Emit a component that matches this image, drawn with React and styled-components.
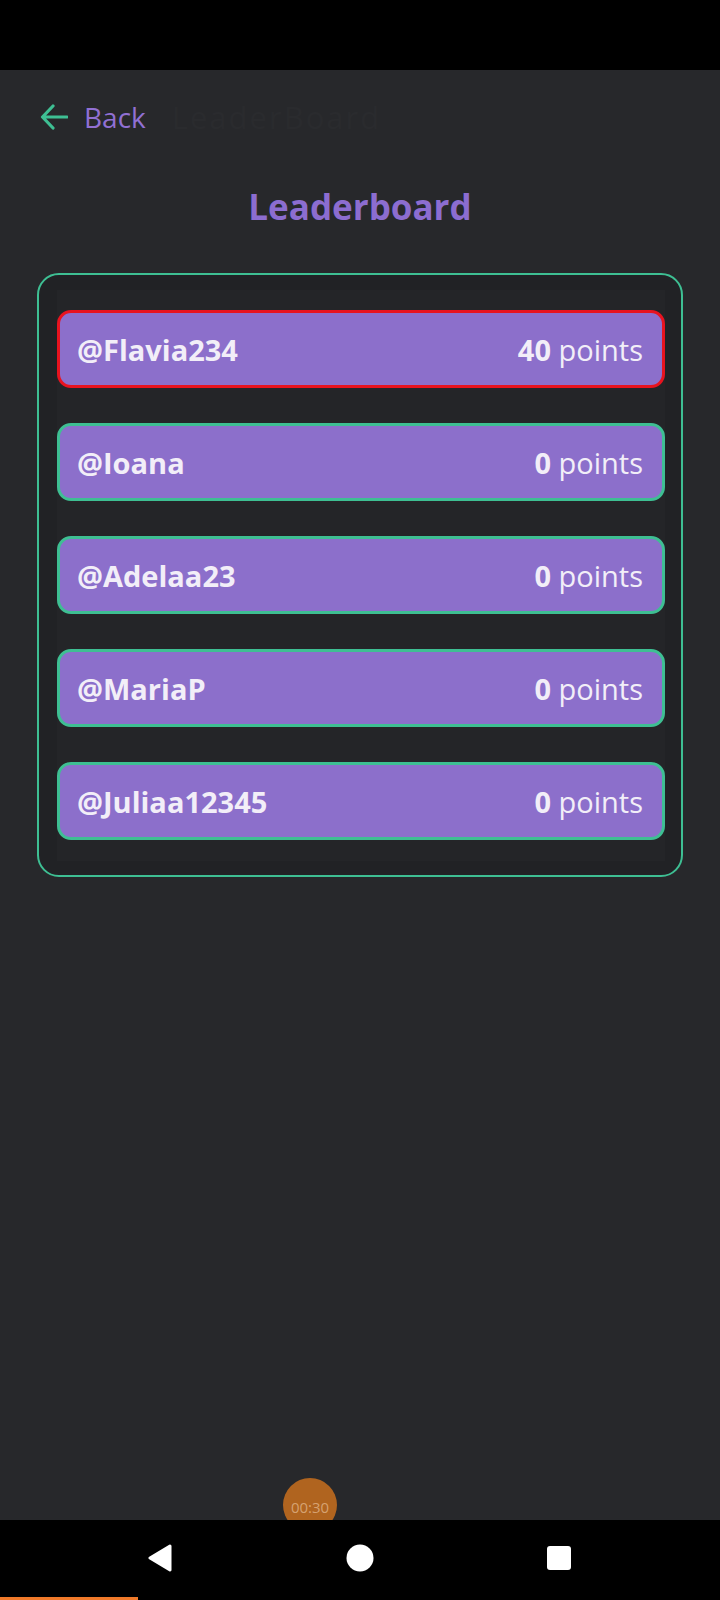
import React from 'react';
import styled, { createGlobalStyle } from 'styled-components';

const GlobalStyle = createGlobalStyle`
    html, body {
        margin: 0;
        padding: 0;
        background: #27282b;
    }
    * {
        box-sizing: border-box;
    }
`;

const Screen = styled.div`
    position: relative;
    display: flex;
    flex-direction: column;
    min-height: 1600px;
    background: #27282b;
    font-family: 'Open Sans', 'DejaVu Sans', sans-serif;
`;

const StatusBar = styled.div`
    height: 70px;
    background: #000;
`;

const Header = styled.div`
    display: flex;
    align-items: center;
    height: 34px;
    margin-top: 30px;
    padding-left: 40px;
`;

const BackButton = styled.div`
    display: flex;
    align-items: center;
    gap: 16px;
    color: #9170d3;
    font-size: 28px;
    line-height: 34px;

    svg {
        display: block;
    }
`;

const GhostTitle = styled.span`
    margin-left: 26px;
    font-size: 31px;
    letter-spacing: 2px;
    line-height: 34px;
    color: #2a2b2e;
`;

const Title = styled.h1`
    margin: 53px 0 0;
    text-align: center;
    font-size: 35px;
    line-height: 40px;
    font-weight: 700;
    color: #8c6dd0;
`;

const Board = styled.div`
    margin: 46px 37px 0;
    padding: 15px 16px 14px 18px;
    border: 2px solid #3ebf93;
    border-radius: 22px;
    background: #212225;
`;

const List = styled.div`
    display: flex;
    flex-direction: column;
    gap: 35px;
    padding: 20px 0 21px;
    background: #242528;
`;

const Row = styled.div`
    display: flex;
    align-items: center;
    justify-content: space-between;
    height: 78px;
    padding: 0 19px 0 17px;
    border: 3px solid ${p => (p.$top ? '#e8131f' : '#3ebf93')};
    border-radius: 14px;
    background: #8c6fcb;
    color: #f2eef8;
    font-size: 29px;
`;

const Name = styled.span`
    font-weight: 700;
`;

const Score = styled.span`
    font-weight: 400;

    b {
        font-weight: 700;
    }
`;

const Spacer = styled.div`
    flex: 1;
`;

const Timer = styled.div`
    position: absolute;
    left: 283px;
    bottom: 80px;
    width: 54px;
    height: 42px;
    overflow: hidden;

    span {
        display: flex;
        align-items: center;
        justify-content: center;
        width: 54px;
        height: 54px;
        padding-top: 4px;
        border-radius: 50%;
        background: #b0641f;
        color: rgba(230, 190, 150, 0.7);
        font-size: 15px;
    }
`;

const NavBar = styled.div`
    position: relative;
    display: flex;
    align-items: center;
    justify-content: space-between;
    height: 80px;
    padding: 0 148px 4px 147px;
    background: #000;

    &::after {
        content: '';
        position: absolute;
        left: 0;
        bottom: 0;
        width: 138px;
        height: 3px;
        background: #f07a2a;
    }
`;

const NavIcon = styled.svg`
    display: block;
`;

const players = [
    { name: '@Flavia234', points: 40 },
    { name: '@Ioana', points: 0 },
    { name: '@Adelaa23', points: 0 },
    { name: '@MariaP', points: 0 },
    { name: '@Juliaa12345', points: 0 },
];

const App = () => (
    <Screen>
        <GlobalStyle />
        <StatusBar />
        <Header>
            <BackButton>
                <svg width="28" height="28" viewBox="0 0 28 28" fill="none">
                    <path d="M13 3 L2.5 14 L13 25 M3 14 H27" stroke="#3ebf93" strokeWidth="3.2" strokeLinecap="round" strokeLinejoin="round" />
                </svg>
                Back
            </BackButton>
            <GhostTitle>LeaderBoard</GhostTitle>
        </Header>
        <Title>Leaderboard</Title>
        <Board>
            <List>
                {players.map((p, i) => (
                    <Row key={p.name} $top={i === 0}>
                        <Name>{p.name}</Name>
                        <Score><b>{p.points}</b> points</Score>
                    </Row>
                ))}
            </List>
        </Board>
        <Spacer />
        <Timer><span>00:30</span></Timer>
        <NavBar>
            <NavIcon width="26" height="28" viewBox="0 0 26 28">
                <path d="M23 2 L3 14 L23 26 Z" fill="#fff" stroke="#fff" strokeWidth="3" strokeLinejoin="round" />
            </NavIcon>
            <NavIcon width="28" height="28" viewBox="0 0 28 28">
                <circle cx="14" cy="14" r="13.5" fill="#fff" />
            </NavIcon>
            <NavIcon width="26" height="26" viewBox="0 0 26 26">
                <rect x="1" y="1" width="24" height="24" rx="3" fill="#fff" />
            </NavIcon>
        </NavBar>
    </Screen>
);

export default App;
